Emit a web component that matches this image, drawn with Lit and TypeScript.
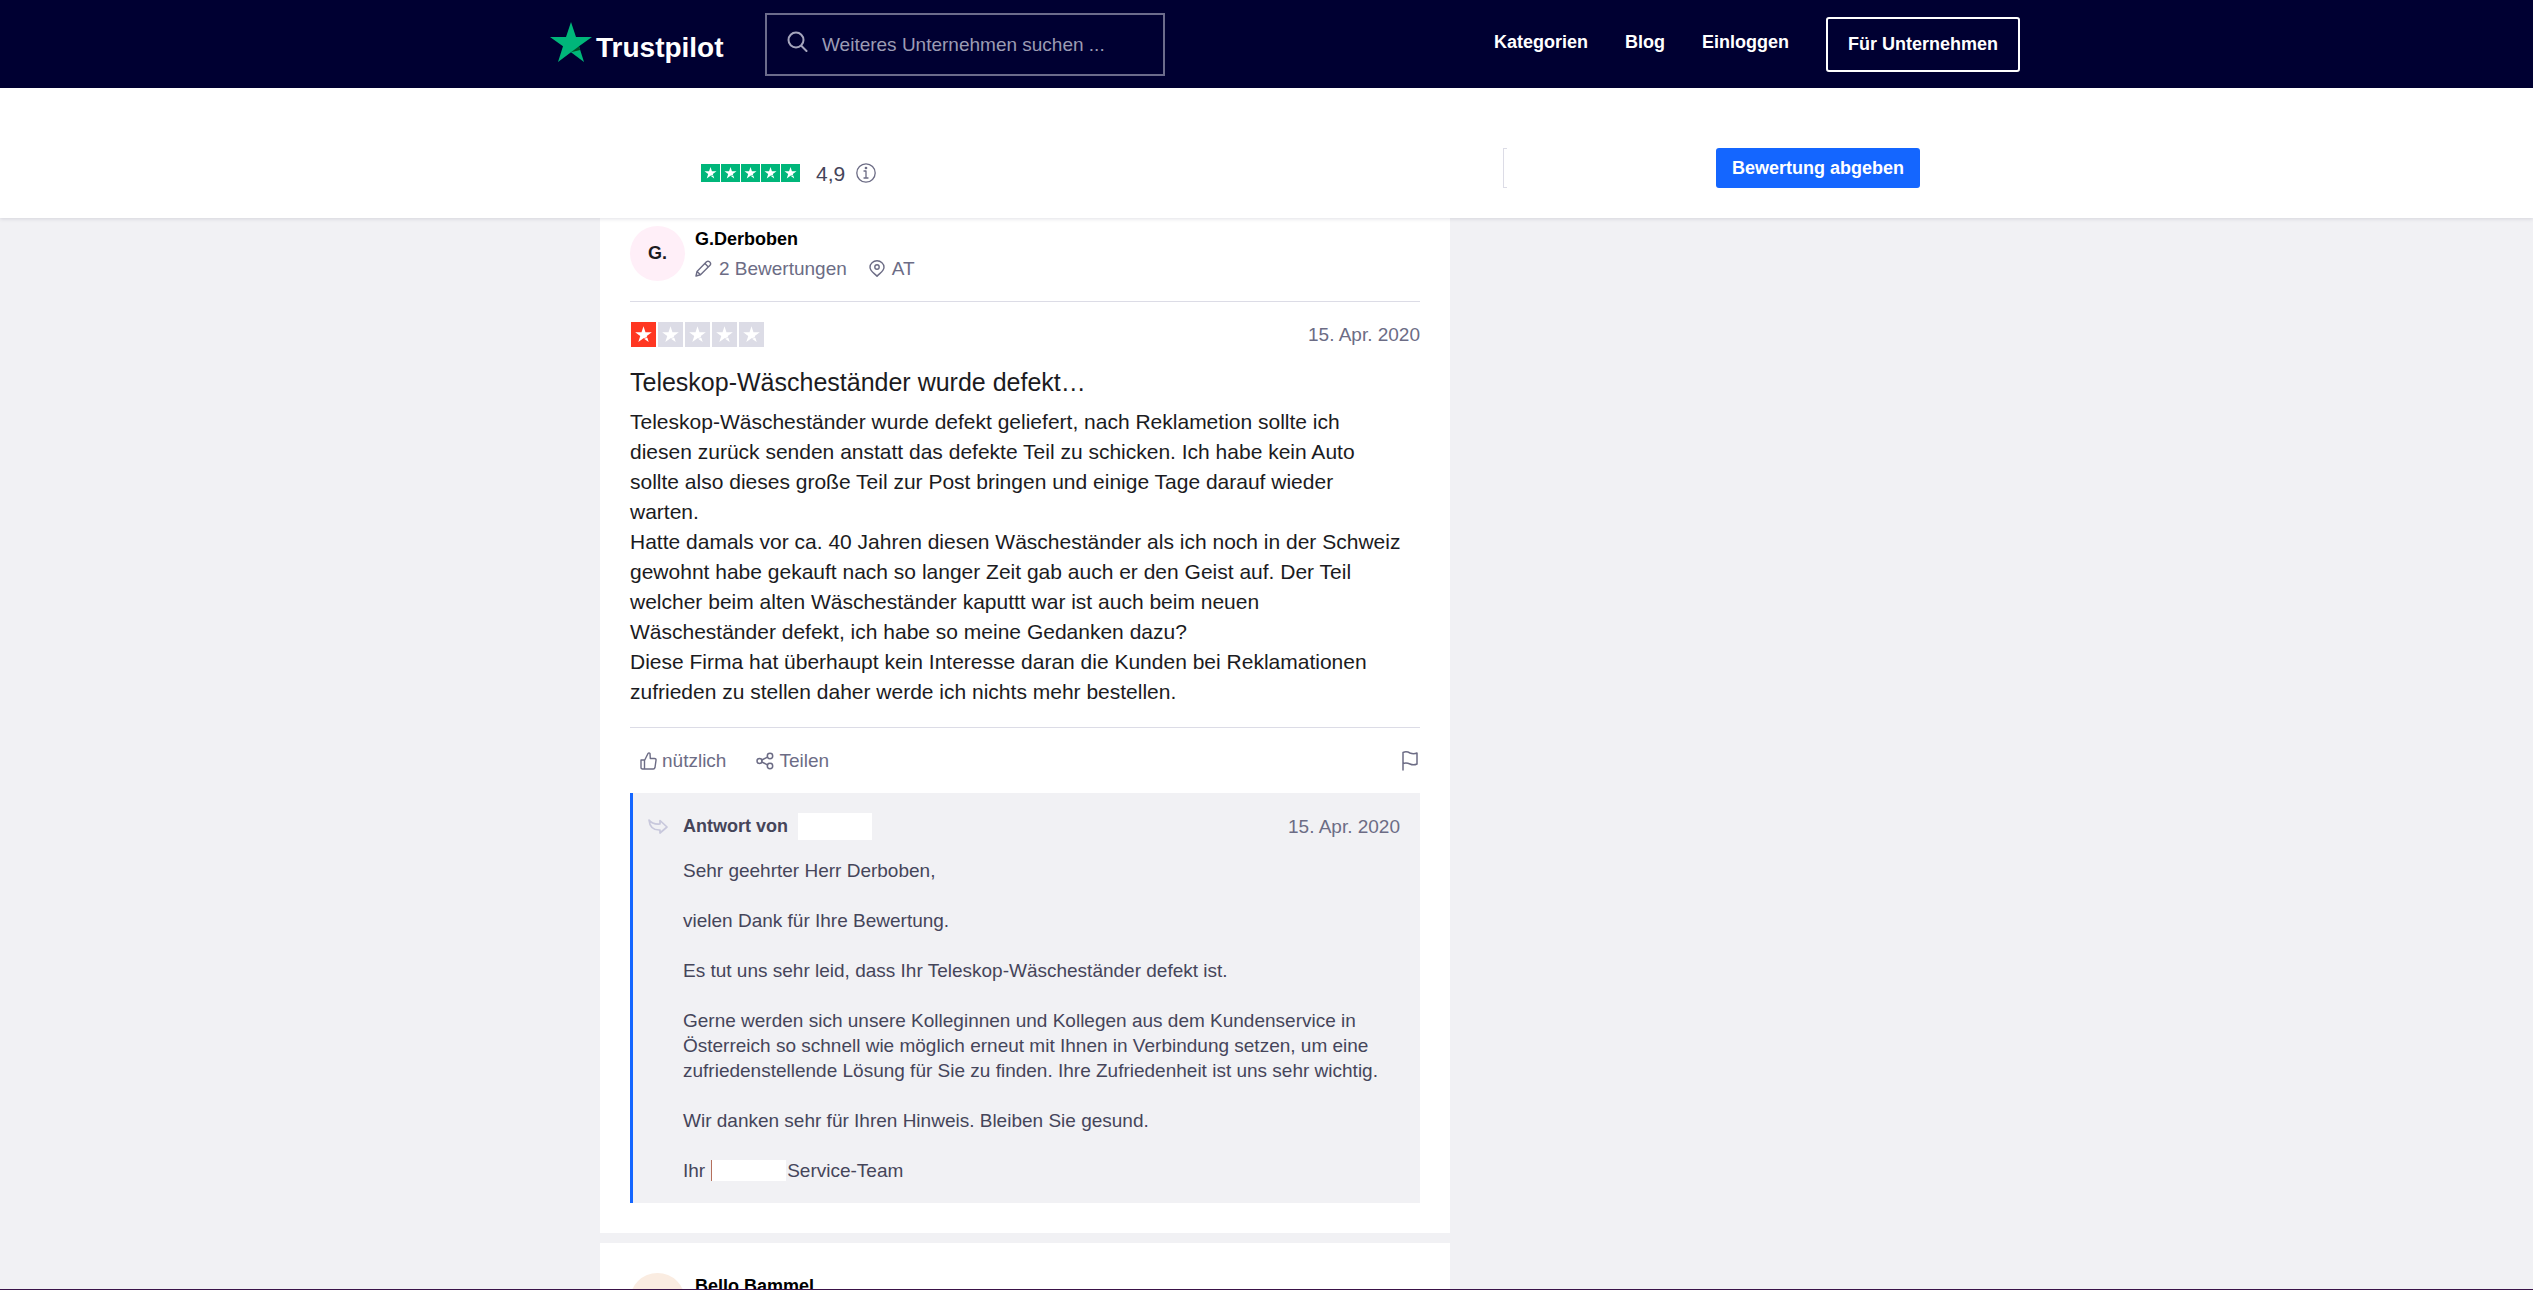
import { LitElement, html, css } from "lit";
import { customElement, property } from "lit/decorators.js";

@customElement("star-rating")
class StarRating extends LitElement {
  @property({ type: Number }) value = 5;
  @property() tone = "good";
  @property() size = "small";

  static styles = css`
    :host { display: block; }
    .row { display: flex; }
    .small { gap: 1px; }
    .large { gap: 2px; padding-left: 1px; }
    .star { display: block; background: #dcdce6; fill: #fff; }
    .small .star { width: 19px; height: 18px; }
    .large .star { width: 25px; height: 25px; }
    .star.good { background: #00b67a; }
    .star.bad { background: #ff3722; }
  `;

  render() {
    return html`<div class="row ${this.size}" role="img" aria-label="${this.value} von 5 Sternen">
      ${[1, 2, 3, 4, 5].map(
        (n) => html`<svg class="star ${n <= this.value ? this.tone : ""}" viewBox="0 0 24 24">
          <path d="M12 4 13.900 9.800H20L15.100 13.400 15.500 14.600 12 15.700 7 19.300 8.900 13.400 4 9.800H10.100Z" />
          <path d="M12.500 16 15.700 15.200 17 19.300Z" />
        </svg>`
      )}
    </div>`;
  }
}

@customElement("app-root")
class AppRoot extends LitElement {
  static styles = css`
    :host {
      display: flex; flex-direction: column; height: 100vh; box-sizing: border-box;
      overflow: hidden; background: #f1f1f4; border-bottom: 1px solid #3a1248;
      font-family: "Liberation Sans", Arial, sans-serif; font-size: 19px; line-height: 25px; color: #1b1b21;
    }
    * { box-sizing: border-box; }
    svg { display: block; flex: none; }
    .line { fill: none; stroke: currentColor; stroke-linecap: round; stroke-linejoin: round; }
    p, h2, h3 { margin: 0; }
    button, input { font: inherit; color: inherit; }

    .top { background: #000032; color: #fff; padding-left: 37px; }
    .top-inner { display: flex; align-items: center; width: 100%; max-width: 1470px; height: 88px; margin: 0 auto; }
    .logo { display: flex; align-items: center; gap: 4px; min-width: 175px; color: #fff; text-decoration: none; font-size: 28px; line-height: 32px; font-weight: 700; }
    .logo-star { margin-bottom: 5px; }
    .logo-text { padding-top: 7px; }
    .search { display: flex; align-items: center; gap: 14px; width: 400px; height: 63px; margin-left: 40px; padding: 0 20px; border: 2px solid #6c6c8c; color: #a5a5bd; }
    .search-icon { margin-bottom: 5px; }
    .search-input { flex: 1; min-width: 0; padding: 0; border: 0; background: none; outline: none; }
    .search-input::placeholder { color: #9c9cb4; opacity: 1; }
    .nav { display: flex; align-items: center; gap: 37px; margin-left: auto; font-size: 18px; font-weight: 700; }
    .nav-link { color: #fff; text-decoration: none; padding-bottom: 4px; }
    .business { height: 55px; padding: 0 20px; border: 2px solid #fff; border-radius: 3px; color: #fff; text-decoration: none; line-height: 51px; }

    .summary { position: relative; background: #fff; padding-right: 13px; box-shadow: 0 1px 4px rgba(0, 0, 50, 0.12); }
    .summary-inner { display: flex; align-items: center; width: 100%; max-width: 1320px; padding: 60px 0 30px 101px; margin: 0 auto; }
    .overall { display: flex; align-items: center; padding-top: 10px; }
    .score { margin: 0 11px 0 16px; font-size: 21px; color: #45455a; }
    .info { padding: 0; border: 0; background: none; color: #6c6c85; }
    .bracket { width: 4px; height: 40px; margin: 0 209px 0 auto; border: 1px solid #dcdce6; border-right: 0; }
    .write { height: 40px; padding: 0 16px; border: 0; border-radius: 3px; background: #1466ff; color: #fff; font-size: 18px; font-weight: 700; }

    .page { flex: 1; min-height: 0; overflow: hidden; padding-right: 13px; }
    .page-inner { width: 100%; max-width: 1320px; margin: 0 auto; display: flex; flex-direction: column; gap: 10px; align-items: flex-start; }
    .card { width: 100%; max-width: 850px; background: #fff; padding: 30px; }
    .card.scrolled { padding-top: 8px; }
    .person { display: flex; gap: 10px; padding-bottom: 20px; border-bottom: 1px solid #dcdce6; }
    .avatar { display: flex; align-items: center; justify-content: center; width: 55px; height: 55px; border-radius: 50%; font-size: 18px; font-weight: 700; }
    .pink { background: #ffeff8; }
    .peach { background: #faece1; }
    .name { font-size: 18px; line-height: 27px; font-weight: 700; color: #000; }
    .facts { display: flex; align-items: center; gap: 7px; padding-top: 3px; color: #6c6c85; }
    .pin { margin-left: 15px; }
    .rating { display: flex; justify-content: space-between; align-items: center; padding-top: 20px; color: #6c6c85; }
    .title { margin-top: 20px; font-size: 25px; line-height: 30px; font-weight: 400; }
    .text { margin-top: 10px; font-size: 21px; line-height: 30px; }
    .actions { display: flex; align-items: center; gap: 30px; height: 66px; margin-top: 20px; padding: 0 2px 0 10px; border-top: 1px solid #dcdce6; color: #6c6c85; }
    .action { display: flex; align-items: center; gap: 5px; padding: 0; border: 0; background: none; }
    .flag { margin-left: auto; }
    .reply { display: grid; grid-template-columns: 20px 1fr; column-gap: 15px; padding: 20px 20px 20px 15px; border-left: 3px solid #1466ff; background: #f1f1f4; color: #45455a; }
    .reply-head { display: flex; align-items: center; gap: 10px; }
    .reply-name { font-size: 18px; font-weight: 700; }
    .mask { width: 74px; height: 27px; background: #fff; }
    .date { margin-left: auto; color: #6c6c85; }
    .reply-text { grid-column: 2; display: flex; flex-direction: column; gap: 25px; padding-top: 18px; }
    .sign { display: flex; align-items: center; }
    .sign-mask { width: 75px; height: 21px; margin: 0 1px 0 6px; border-left: 1px solid #b5705c; background: #fff; }
  `;

  render() {
    return html`
      <header class="top">
        <div class="top-inner">
          <a class="logo" href="#">
            <svg class="logo-star" width="42" height="40" viewBox="0 0 42 40">
              <path fill="#00b67a" d="M21 0 26 15H42L29 24.300 34 40 21 30.200 8 40 13 24.300 0 15H16Z" />
              <path fill="#005128" d="M30.200 28 29 24.300 21 30.200Z" />
            </svg>
            <span class="logo-text">Trustpilot</span>
          </a>
          <label class="search">
            <svg class="search-icon line" width="21" height="21" viewBox="0 0 21 21" stroke-width="2"><circle cx="9" cy="9" r="7.500" /><path d="M14.500 15 19.500 20" /></svg>
            <input class="search-input" type="search" aria-label="Suche" placeholder="Weiteres Unternehmen suchen ..." />
          </label>
          <nav class="nav">
            <a class="nav-link" href="#">Kategorien</a>
            <a class="nav-link" href="#">Blog</a>
            <a class="nav-link" href="#">Einloggen</a>
            <a class="business" href="#">Für Unternehmen</a>
          </nav>
        </div>
      </header>

      <section class="summary">
        <div class="summary-inner">
          <div class="overall">
            <star-rating value="5" tone="good" size="small"></star-rating>
            <span class="score">4,9</span>
            <button class="info" aria-label="Info">
              <svg class="line" width="20" height="20" viewBox="0 0 20 20" stroke-width="1.300"><circle cx="10" cy="10" r="9.200" /><path d="M8 8H10V15M8 15H12" /><circle cx="10" cy="5" r="0.700" fill="currentColor" /></svg>
            </button>
          </div>
          <span class="bracket"></span>
          <button class="write">Bewertung abgeben</button>
        </div>
      </section>

      <main class="page">
        <div class="page-inner">
          <article class="card scrolled">
            <div class="person">
              <div class="avatar pink">G.</div>
              <div>
                <h3 class="name">G.Derboben</h3>
                <div class="facts">
                  <svg class="line" width="17" height="17" viewBox="0 0 17 17" stroke-width="1.400"><path d="M1 16 2 11.500 11.500 1.800Q13 0.500 14.500 1.800 16.500 3.500 15 5.300L5.500 14.800ZM10 3.500 13.300 6.900M2 11.500 5.500 14.800" /></svg>
                  <span>2 Bewertungen</span>
                  <svg class="pin line" width="16" height="17" viewBox="0 0 16 17" stroke-width="1.400"><path d="M8 16.300C6 13.500 1 11.500 1 7.300A7 6.500 0 0 1 15 7.300C15 11.500 10 13.500 8 16.300Z" /><circle cx="8" cy="7" r="2.200" /></svg>
                  <span>AT</span>
                </div>
              </div>
            </div>
            <div class="rating">
              <star-rating value="1" tone="bad" size="large"></star-rating>
              <time>15. Apr. 2020</time>
            </div>
            <h2 class="title">Teleskop-Wäscheständer wurde defekt…</h2>
            <p class="text">
              Teleskop-Wäscheständer wurde defekt geliefert, nach Reklametion sollte ich<br />
              diesen zurück senden anstatt das defekte Teil zu schicken. Ich habe kein Auto<br />
              sollte also dieses große Teil zur Post bringen und einige Tage darauf wieder<br />
              warten.<br />
              Hatte damals vor ca. 40 Jahren diesen Wäscheständer als ich noch in der Schweiz<br />
              gewohnt habe gekauft nach so langer Zeit gab auch er den Geist auf. Der Teil<br />
              welcher beim alten Wäscheständer kaputtt war ist auch beim neuen<br />
              Wäscheständer defekt, ich habe so meine Gedanken dazu?<br />
              Diese Firma hat überhaupt kein Interesse daran die Kunden bei Reklamationen<br />
              zufrieden zu stellen daher werde ich nichts mehr bestellen.
            </p>
            <div class="actions">
              <button class="action">
                <svg class="line" width="17" height="18" viewBox="0 0 17 18" stroke-width="1.400"><path d="M1 8H4.500V17H2.500Q1 17 1 15.500ZM4.500 8.500 8 1.500Q9 0.300 10 1.500L10.300 6.500H14.500Q16.300 6.500 16 8.300L15 15.500Q14.600 17 13.300 17H4.500" /></svg>
                <span>nützlich</span>
              </button>
              <button class="action">
                <svg class="line" width="18" height="18" viewBox="0 0 18 18" stroke-width="1.500"><circle cx="3.500" cy="9" r="2.500" /><circle cx="14" cy="4" r="2.700" /><circle cx="14" cy="14" r="2.700" /><path d="M5.800 8 11.500 5.200M5.800 10 11.500 12.800" /></svg>
                <span>Teilen</span>
              </button>
              <button class="action flag" aria-label="Melden">
                <svg class="line" width="16" height="20" viewBox="0 0 16 20" stroke-width="1.500"><path d="M1 19V1.500Q4.500 0 8 2 11.500 3.500 15 2V13Q11.500 14.700 8 13 4.500 11.500 1 12.500" /></svg>
              </button>
            </div>
            <section class="reply">
              <svg class="line" color="#c8c8dc" width="20" height="27" viewBox="0 0 20 27" stroke-width="1.700"><path d="M1 7Q4 11.500 12 11V7.500L19 14 12 20V17Q2 17.500 1 7Z" /></svg>
              <div class="reply-head"><h3 class="reply-name">Antwort von</h3><span class="mask"></span><time class="date">15. Apr. 2020</time></div>
              <div class="reply-text">
                <p>Sehr geehrter Herr Derboben,</p>
                <p>vielen Dank für Ihre Bewertung.</p>
                <p>Es tut uns sehr leid, dass Ihr Teleskop-Wäscheständer defekt ist.</p>
                <p>
                  Gerne werden sich unsere Kolleginnen und Kollegen aus dem Kundenservice in<br />
                  Österreich so schnell wie möglich erneut mit Ihnen in Verbindung setzen, um eine<br />
                  zufriedenstellende Lösung für Sie zu finden. Ihre Zufriedenheit ist uns sehr wichtig.
                </p>
                <p>Wir danken sehr für Ihren Hinweis. Bleiben Sie gesund.</p>
                <p class="sign">Ihr<span class="sign-mask"></span>Service-Team</p>
              </div>
            </section>
          </article>
          <article class="card">
            <div class="person">
              <div class="avatar peach"></div>
              <h3 class="name">Bello Bammel</h3>
            </div>
          </article>
        </div>
      </main>
    `;
  }
}
